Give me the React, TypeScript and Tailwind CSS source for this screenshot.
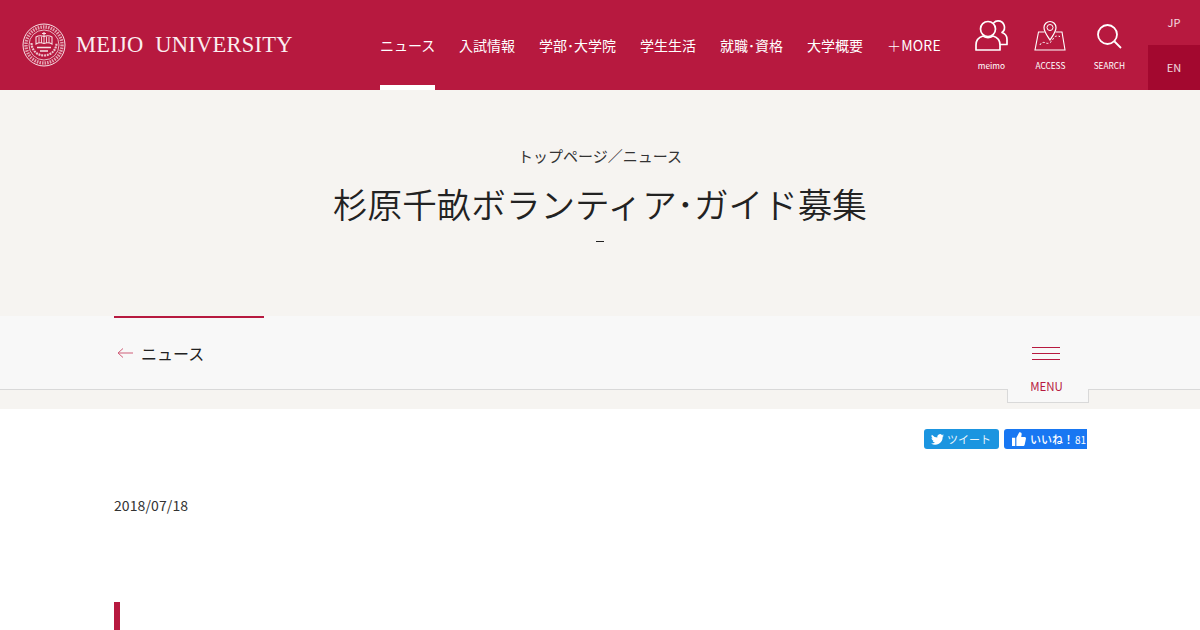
const NAV_ITEMS = ['入試情報', '学部･大学院', '学生生活', '就職･資格', '大学概要']

function Seal() {
  return (
    <svg width="44" height="44" viewBox="0 0 44 44" fill="none" stroke="#f6dfe4">
      <circle cx="22" cy="22" r="21" strokeWidth="1" />
      <circle cx="22" cy="22" r="18" strokeWidth="3.400" strokeDasharray="1.500 1.100" opacity="0.7" />
      <circle cx="22" cy="22" r="15" strokeWidth="0.800" />
      <path d="M9.500 20c0 7 5.500 12.500 12.500 12.500S34.500 27 34.500 20" strokeWidth="2.200" strokeDasharray="2 .8" opacity="0.85" />
      <path d="M14 21c2.500-1.500 5.500-1.500 8-.5 2.500-1 5.500-1 8 .5v-7c-2.500-1.500-5.500-1.500-8-.5-2.500-1-5.500-1-8 .5z" strokeWidth="1.100" />
      <path d="M17 14v6M19.500 13.500v6.500M22 13.500v7M24.500 13.500V20M27 14v6" strokeWidth="0.900" />
      <path d="M22 9v4M20 10.500h4" strokeWidth="1.100" />
      <path d="M15 24.500h14M18 28h8" strokeWidth="1.500" />
    </svg>
  )
}

function PeopleIcon() {
  return (
    <svg width="33" height="31" viewBox="0 0 33 31" fill="none" stroke="#fff" strokeWidth="1.700" strokeLinejoin="round">
      <circle cx="13" cy="9" r="7.500" />
      <path d="M1 30v-5c0-5 3.500-8 7-9 3 2 7 2 10 0 3.500 1 7 4 7 9v5z" />
      <path d="M18.500 3c1.200-1.300 2.800-2.100 4.500-2.100a6.500 6.500 0 0 1 4 11.600c3 1 5 3.500 5 7v5h-7" />
    </svg>
  )
}

function MapPinIcon() {
  return (
    <svg width="32" height="31" viewBox="0 0 32 31" fill="none" stroke="#fff" strokeWidth="1">
      <path d="M16 20c-3-5-6-8-6-12.500a6 6 0 0 1 12 0C22 12 19 15 16 20z" strokeWidth="1.200" />
      <circle cx="16" cy="7.500" r="3" />
      <path d="M10.500 12H4.500L1 30h30l-3-18h-6.500" strokeWidth="1.100" />
      <path d="M6 25c1-3 4-3 6-2s5 0 7-4 5-3 7-2.500" strokeDasharray="2 1.800" />
    </svg>
  )
}

function SearchIcon() {
  return (
    <svg width="25" height="25" viewBox="0 0 25 25" fill="none" stroke="#fff" strokeWidth="1.800" className="mb-[2px]">
      <circle cx="10.500" cy="10.500" r="9.500" />
      <path d="M17.500 17.500l6.500 6.500" />
    </svg>
  )
}

function TwitterIcon() {
  return (
    <svg width="13" height="11" viewBox="0 0 24 20" fill="#fff" className="shrink-0">
      <path d="M24 2.400a9.800 9.800 0 0 1-2.800.8A4.900 4.900 0 0 0 23.300.500a9.800 9.800 0 0 1-3.100 1.200 4.900 4.900 0 0 0-8.400 4.500A14 14 0 0 1 1.700 1a4.900 4.900 0 0 0 1.500 6.600 4.900 4.900 0 0 1-2.200-.6c0 2.400 1.700 4.500 4 5a4.900 4.900 0 0 1-2.200.1 4.900 4.900 0 0 0 4.600 3.400A9.900 9.900 0 0 1 0 17.500 14 14 0 0 0 21.500 5c1-.7 1.900-1.600 2.500-2.600z" />
    </svg>
  )
}

function ThumbIcon() {
  return (
    <svg width="14" height="14" viewBox="0 0 24 24" fill="#fff" className="shrink-0">
      <path d="M0 10h5.500v14H0zM7.500 10l5-9.500c2.500-.8 4.500 1 4 3.800L15.800 8.500H21.500c1.700 0 2.800 1.300 2.400 2.900l-2.200 10.300c-.3 1.400-1.300 2.300-2.700 2.300H7.500z" />
    </svg>
  )
}

function HeaderIcon({ label, children }: { label: string; children: React.ReactNode }) {
  return (
    <div className="flex flex-col items-center w-[59px]">
      <div className="h-[31px] flex items-end justify-center">{children}</div>
      <span className="mt-[7px] text-[8.300px] leading-[14px] text-white">{label}</span>
    </div>
  )
}

export default function App() {
  return (
    <div
      className="h-[630px] w-[1200px] overflow-hidden bg-white text-[#222]"
      style={{ fontFamily: '"Noto Sans CJK JP", "Noto Sans", sans-serif' }}
    >
      <header className="h-[90px] bg-[#b7193f] flex text-white">
        <div className="w-[380px] pl-[22px] flex items-center gap-[10px] shrink-0">
          <Seal />
          <span className="font-['Liberation_Serif',serif] text-[22.500px] leading-none tracking-[0.25px] whitespace-pre text-[#fbeef1]">
            MEIJO  UNIVERSITY
          </span>
        </div>
        <nav className="flex gap-[24px] text-[14px]">
          <div className="w-[55px] h-[90px] flex items-center whitespace-nowrap border-b-[5px] border-white pt-[5px]">ニュース</div>
          {NAV_ITEMS.map((item) => (
            <div key={item} className="h-[90px] flex items-center whitespace-nowrap">
              {item}
            </div>
          ))}
          <div className="h-[90px] flex items-center whitespace-nowrap tracking-[0.2px]">
            <span className="font-light">＋</span>MORE
          </div>
        </nav>
        <div className="ml-[21px] flex pt-[20px]">
          <HeaderIcon label="meimo">
            <PeopleIcon />
          </HeaderIcon>
          <HeaderIcon label="ACCESS">
            <MapPinIcon />
          </HeaderIcon>
          <HeaderIcon label="SEARCH">
            <SearchIcon />
          </HeaderIcon>
        </div>
        <div className="ml-auto w-[52px] flex flex-col text-[11px] text-center text-white/85">
          <div className="h-[45px] flex items-center justify-center">JP</div>
          <div className="h-[45px] flex items-center justify-center bg-[#a3082f]">EN</div>
        </div>
      </header>

      <section className="h-[226px] bg-[#f6f4f1] flex flex-col items-center pt-[54px]">
        <p className="text-[15px] leading-[24px] text-[#333]">トップページ／ニュース</p>
        <h1 className="mt-[10px] text-[34.600px] font-[350] leading-[50px]">杉原千畝ボランティア･ガイド募集</h1>
        <span className="mt-[13px] w-[8px] h-px bg-[#222]" />
      </section>

      <section className="h-[93px] bg-[#f6f4f1]">
        <div className="relative h-[74px] bg-[#f8f8f8] border-b border-[#d9d9d9] pl-[114px] flex items-start">
          <div className="w-[150px] h-[72px] border-t-2 border-[#b7193f] flex items-center pl-[3px]">
            <svg width="16" height="10" viewBox="0 0 16 10" fill="none" stroke="#cf5f79" strokeWidth="1">
              <path d="M16 5H1M6 .5L1 5l5 4.500" />
            </svg>
            <span className="ml-[8px] text-[16px]">ニュース</span>
          </div>
          <div className="absolute left-[1032px] top-[31px] w-[28px] flex flex-col gap-[5px]">
            <span className="h-px bg-[#b7193f]" />
            <span className="h-px bg-[#b7193f]" />
            <span className="h-px bg-[#b7193f]" />
          </div>
          <div className="absolute left-[1007px] top-[73px] w-[82px] h-[14px] bg-[#f8f8f8] border-x border-b border-[#d9d9d9]" />
          <span className="absolute left-[1007px] top-[62px] w-[79px] text-center text-[#b7193f] text-[11.500px] leading-[16px]">MENU</span>
        </div>
      </section>

      <main className="pl-[114px] pr-[113px]">
        <div className="flex justify-end gap-[5px] pt-[20px]">
          <div className="w-[75px] h-[20px] rounded-[3px] bg-[#1b95e0] flex items-center pl-[7px] gap-[3px] text-white text-[11px]">
            <TwitterIcon />
            <span className="opacity-90">ツイート</span>
          </div>
          <div className="w-[83px] h-[20px] rounded-l-[3px] bg-[#1877f2] flex items-center pl-[8px] text-white text-[11px] font-medium whitespace-nowrap">
            <ThumbIcon />
            <span className="ml-[4px]">いいね！</span>
            <span className="ml-[1px] font-normal text-[10px] shrink-0">81</span>
          </div>
        </div>
        <p className="mt-[46px] text-[14px] leading-[20px] tracking-[0.1px] text-[#333]">2018/07/18</p>
        <div className="mt-[87px] w-[6px] h-[40px] bg-[#b7193f]" />
      </main>
    </div>
  )
}
